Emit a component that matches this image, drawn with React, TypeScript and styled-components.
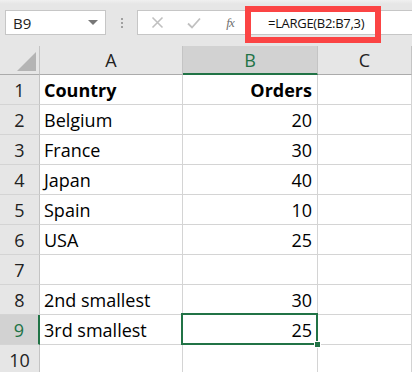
import React from "react";
import styled, { createGlobalStyle, css } from "styled-components";

const Global = createGlobalStyle`
  html, body { margin: 0; padding: 0; background: #e6e6e6; }
  body { width: 412px; height: 372px; overflow: hidden; font-family: "Open Sans", "Noto Sans", sans-serif; }
`;

const Page = styled.div`
  width: 412px;
  height: 372px;
  overflow: hidden;
  background: #e6e6e6;
  position: relative;
`;

const Toolbar = styled.div`
  height: 46px;
  display: flex;
  align-items: flex-start;
  padding-top: 10px;
  padding-left: 5px;
  box-sizing: border-box;
  background: linear-gradient(#f0f0f0 0px, #e6e6e6 4px);
  position: relative;
`;

const NameBox = styled.div`
  width: 101px;
  height: 25px;
  box-sizing: border-box;
  background: #fff;
  border: 1px solid #c6c6c6;
  display: flex;
  align-items: center;
  justify-content: space-between;
  padding: 0 7px 0 7px;
  font-size: 15px;
  color: #222;
`;

const Caret = styled.span`
  width: 0;
  height: 0;
  border-left: 5px solid transparent;
  border-right: 5px solid transparent;
  border-top: 5px solid #777;
`;

const Dots = styled.div`
  width: 31px;
  height: 25px;
  display: flex;
  flex-direction: column;
  align-items: center;
  justify-content: center;
  gap: 2px;
  span {
    width: 2px;
    height: 2px;
    background: #a0a0a0;
  }
`;

const FormulaBar = styled.div`
  flex: 1;
  height: 25px;
  box-sizing: border-box;
  background: #fff;
  border: 1px solid #c6c6c6;
  border-right: none;
  display: flex;
  align-items: center;
`;

const IconSlot = styled.div<{ $w: number }>`
  width: ${(p) => p.$w}px;
  height: 23px;
  display: flex;
  align-items: center;
  justify-content: center;
  flex-shrink: 0;
`;

const Fx = styled.span`
  font-family: "Liberation Serif", serif;
  font-style: italic;
  font-size: 13px;
  color: #707070;
  letter-spacing: -1px;
`;

const FormulaText = styled.span`
  font-size: 13px;
  letter-spacing: -0.3px;
  color: #111;
  padding-left: 20px;
`;

const Highlight = styled.div`
  position: absolute;
  left: 245px;
  top: 6px;
  width: 136px;
  height: 37px;
  box-sizing: border-box;
  border: 6px solid #fb4444;
  pointer-events: none;
`;

const Grid = styled.div`
  display: grid;
  grid-template-columns: 40px 143px 135px 1fr;
  grid-template-rows: 29px repeat(9, 30px) 30px;
  background: #fff;
`;

const Corner = styled.div`
  background: #e6e6e6;
  border-right: 1px solid #c4c4c4;
  border-bottom: 1px solid #ababab;
  box-sizing: border-box;
  position: relative;
  &::after {
    content: "";
    position: absolute;
    right: 3px;
    bottom: 3px;
    width: 0;
    height: 0;
    border-left: 19px solid transparent;
    border-bottom: 19px solid #b4b4b4;
  }
`;

const ColHead = styled.div<{ $sel?: boolean }>`
  box-sizing: border-box;
  background: ${(p) => (p.$sel ? "#d2d2d2" : "#e6e6e6")};
  border-right: 1px solid #c4c4c4;
  border-bottom: ${(p) => (p.$sel ? "2px solid #217346" : "1px solid #ababab")};
  color: ${(p) => (p.$sel ? "#217346" : "#222")};
  display: flex;
  align-items: center;
  justify-content: center;
  font-size: 18px;
  padding-top: ${(p) => (p.$sel ? "1px" : "0")};
`;

const RowHead = styled.div<{ $sel?: boolean }>`
  box-sizing: border-box;
  background: ${(p) => (p.$sel ? "#d2d2d2" : "#e6e6e6")};
  border-right: ${(p) => (p.$sel ? "2px solid #217346" : "1px solid #c4c4c4")};
  border-bottom: 1px solid #d4d4d4;
  color: ${(p) => (p.$sel ? "#217346" : "#222")};
  display: flex;
  align-items: center;
  justify-content: center;
  font-size: 18px;
  padding-top: 1px;
`;

const Cell = styled.div<{ $right?: boolean; $bold?: boolean; $sel?: boolean }>`
  box-sizing: border-box;
  border-right: 1px solid #d4d4d4;
  border-bottom: 1px solid #d4d4d4;
  display: flex;
  align-items: center;
  justify-content: ${(p) => (p.$right ? "flex-end" : "flex-start")};
  padding: 1px 5px 0 4px;
  font-size: 18px;
  font-weight: ${(p) => (p.$bold ? 700 : 400)};
  color: #000;
  white-space: nowrap;
  position: relative;
  ${(p) =>
    p.$sel &&
    css`
      &::before {
        content: "";
        position: absolute;
        left: -2px;
        top: -2px;
        right: -1px;
        bottom: -1px;
        border: 2px solid #217346;
        pointer-events: none;
      }
      &::after {
        content: "";
        position: absolute;
        right: -4px;
        bottom: -4px;
        width: 5px;
        height: 5px;
        background: #217346;
        border: 1px solid #fff;
        z-index: 2;
      }
    `}
`;

const rows: [string, string, boolean][] = [
  ["Country", "Orders", true],
  ["Belgium", "20", false],
  ["France", "30", false],
  ["Japan", "40", false],
  ["Spain", "10", false],
  ["USA", "25", false],
  ["", "", false],
  ["2nd smallest", "30", false],
  ["3rd smallest", "25", false],
  ["", "", false],
];

export default function App() {
  return (
    <>
      <Global />
      <Page>
        <Toolbar>
          <NameBox>
            <span>B9</span>
            <Caret />
          </NameBox>
          <Dots>
            <span />
            <span />
            <span />
          </Dots>
          <FormulaBar>
            <IconSlot $w={38}>
              <svg width="13" height="13" viewBox="0 0 13 13">
                <path d="M1.5 1.5 L11.5 11.5 M11.5 1.5 L1.5 11.5" stroke="#c0c0c0" strokeWidth="1.6" fill="none" />
              </svg>
            </IconSlot>
            <IconSlot $w={36}>
              <svg width="14" height="12" viewBox="0 0 14 12">
                <path d="M1 6.5 L5 10.5 L13 1.5" stroke="#c0c0c0" strokeWidth="1.8" fill="none" />
              </svg>
            </IconSlot>
            <IconSlot $w={36}>
              <Fx>fx</Fx>
            </IconSlot>
            <FormulaText>=LARGE(B2:B7,3)</FormulaText>
          </FormulaBar>
          <Highlight />
        </Toolbar>
        <Grid>
          <Corner />
          <ColHead>A</ColHead>
          <ColHead $sel>B</ColHead>
          <ColHead>C</ColHead>
          {rows.map(([a, b, bold], i) => (
            <React.Fragment key={i}>
              <RowHead $sel={i === 8}>{i + 1}</RowHead>
              <Cell $bold={bold}>{a}</Cell>
              <Cell $right $bold={bold} $sel={i === 8}>
                {b}
              </Cell>
              <Cell />
            </React.Fragment>
          ))}
        </Grid>
      </Page>
    </>
  );
}
